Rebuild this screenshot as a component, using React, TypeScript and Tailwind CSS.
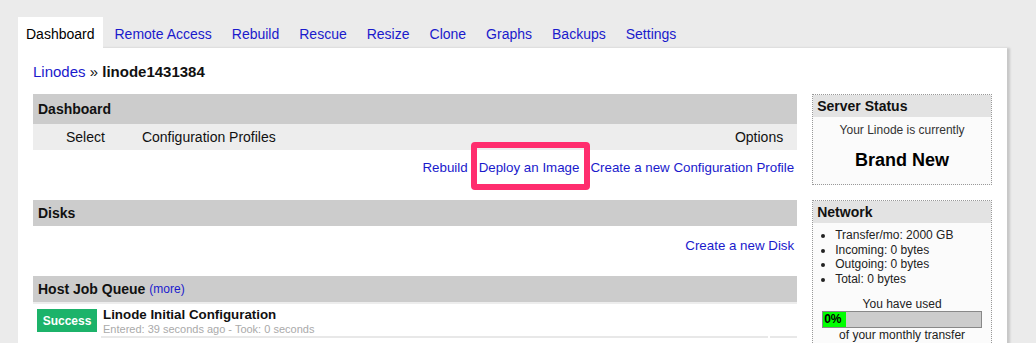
import React from "react"

const tabs = ["Dashboard", "Remote Access", "Rebuild", "Rescue", "Resize", "Clone", "Graphs", "Backups", "Settings"]

const Bar = ({ children, tall }: { children: React.ReactNode; tall?: boolean }) => (
  <div className={`${tall ? "h-[30px]" : "h-[26px]"} bg-[#cccccc] pl-[5px] flex items-center font-bold text-[14px] text-[#111]`}>
    {children}
  </div>
)

const SideBox = ({ title, children }: { title: string; children: React.ReactNode }) => (
  <div className="border border-dotted border-[#999] bg-[#fbfbfb]">
    <div className="h-[22px] bg-[#e3e3e3] pl-[4px] flex items-center font-bold text-[14px] text-[#111]">{title}</div>
    {children}
  </div>
)

const App = () => {
  return (
    <div className="min-h-screen bg-[#ebebeb] font-['Liberation_Sans',Arial,sans-serif] text-[14px] text-[#111]">
      <div className="pt-[17px] pl-[18px] flex gap-[4px]">
        {tabs.map((t, i) => (
          <div
            key={t}
            className={`h-[31px] pt-[3px] px-[8px] flex items-center ${i === 0 ? "bg-white text-black" : "text-[#1a1acc]"}`}
          >
            {t}
          </div>
        ))}
      </div>

      <div className="ml-[18px] w-[989px] bg-white shadow-[3px_0_2px_#c8c8c8] px-[15px] pb-[20px]">
        <div className="pt-[15px] h-[46px] text-[15px] leading-[18px]">
          <span className="text-[#1a1acc]">Linodes</span> » <span className="font-bold">linode1431384</span>
        </div>

        <div className="flex gap-[15px]">
          <div className="w-[765px]">
            <Bar tall>Dashboard</Bar>
            <div className="h-[26px] bg-[#ededed] flex items-center">
              <span className="ml-[33px]">Select</span>
              <span className="ml-[37px]">Configuration Profiles</span>
              <span className="ml-auto mr-[14px]">Options</span>
            </div>
            <div className="h-[50px] pt-[10px] pr-[3px] flex items-start justify-end gap-[11px] text-[#1a1acc] text-[13.33px] leading-[16px]">
              <span>Rebuild</span>
              <span className="relative">
                Deploy an Image
                <span className="absolute left-[-8px] right-[-11px] top-[-18px] bottom-[-14px] border-[6px] border-[#ff2d6e] rounded-[4px]" />
              </span>
              <span>Create a new Configuration Profile</span>
            </div>

            <Bar>Disks</Bar>
            <div className="h-[50px] pt-[12px] pr-[3px] flex justify-end text-[#1a1acc] text-[13.33px] leading-[16px]">
              <span>Create a new Disk</span>
            </div>

            <Bar>
              Host Job Queue <span className="ml-[4px] font-normal text-[12px] text-[#1a1acc]">(more)</span>
            </Bar>
            <div className="h-[2px] bg-[#ededed]" />
            <div className="flex pt-[5px] pl-[4px]">
              <div className="w-[60px] h-[23px] bg-[#1cb36a] text-white font-bold text-[12px] flex items-center justify-center">
                Success
              </div>
              <div className="ml-[4px] flex-1">
                <div className="flex">
                  <div className="flex-1 border-b-2 border-[#e8e8e8] pl-[2px]">
                    <div className="font-bold text-[13.33px] leading-[16px] -mt-[2px]">Linode Initial Configuration</div>
                    <div className="text-[11px] text-[#aaa] leading-[13px]">Entered: 39 seconds ago - Took: 0 seconds</div>
                  </div>
                  <div className="w-[27px] ml-[2px] border-b-2 border-[#e8e8e8]" />
                </div>
              </div>
            </div>
          </div>

          <div className="w-[180px]">
            <SideBox title="Server Status">
              <div className="text-center pt-[6px] pb-[13px]">
                <div className="text-[12px] leading-[14px] text-[#333]">Your Linode is currently</div>
                <div className="mt-[12px] text-[18px] leading-[22px] font-bold text-black">Brand New</div>
              </div>
            </SideBox>
            <div className="mt-[15px]">
              <SideBox title="Network">
                <ul className="list-disc pl-[22px] pt-[5px] text-[12px] leading-[14.5px] text-[#222]">
                  <li>Transfer/mo: 2000 GB</li>
                  <li>Incoming: 0 bytes</li>
                  <li>Outgoing: 0 bytes</li>
                  <li>Total: 0 bytes</li>
                </ul>
                <div className="text-center text-[12px] leading-[14px] text-[#222] mt-[11px]">You have used</div>
                <div className="mx-[9px] h-[17px] border border-[#888] bg-[#cccccc] flex">
                  <div className="w-[23px] bg-[#00ff00] font-bold text-[12px] leading-[15px] pl-[1px] text-black">0%</div>
                </div>
                <div className="text-center text-[12px] leading-[14px] text-[#222] pb-[6px]">of your monthly transfer</div>
              </SideBox>
            </div>
          </div>
        </div>
      </div>
    </div>
  )
}

export default App
